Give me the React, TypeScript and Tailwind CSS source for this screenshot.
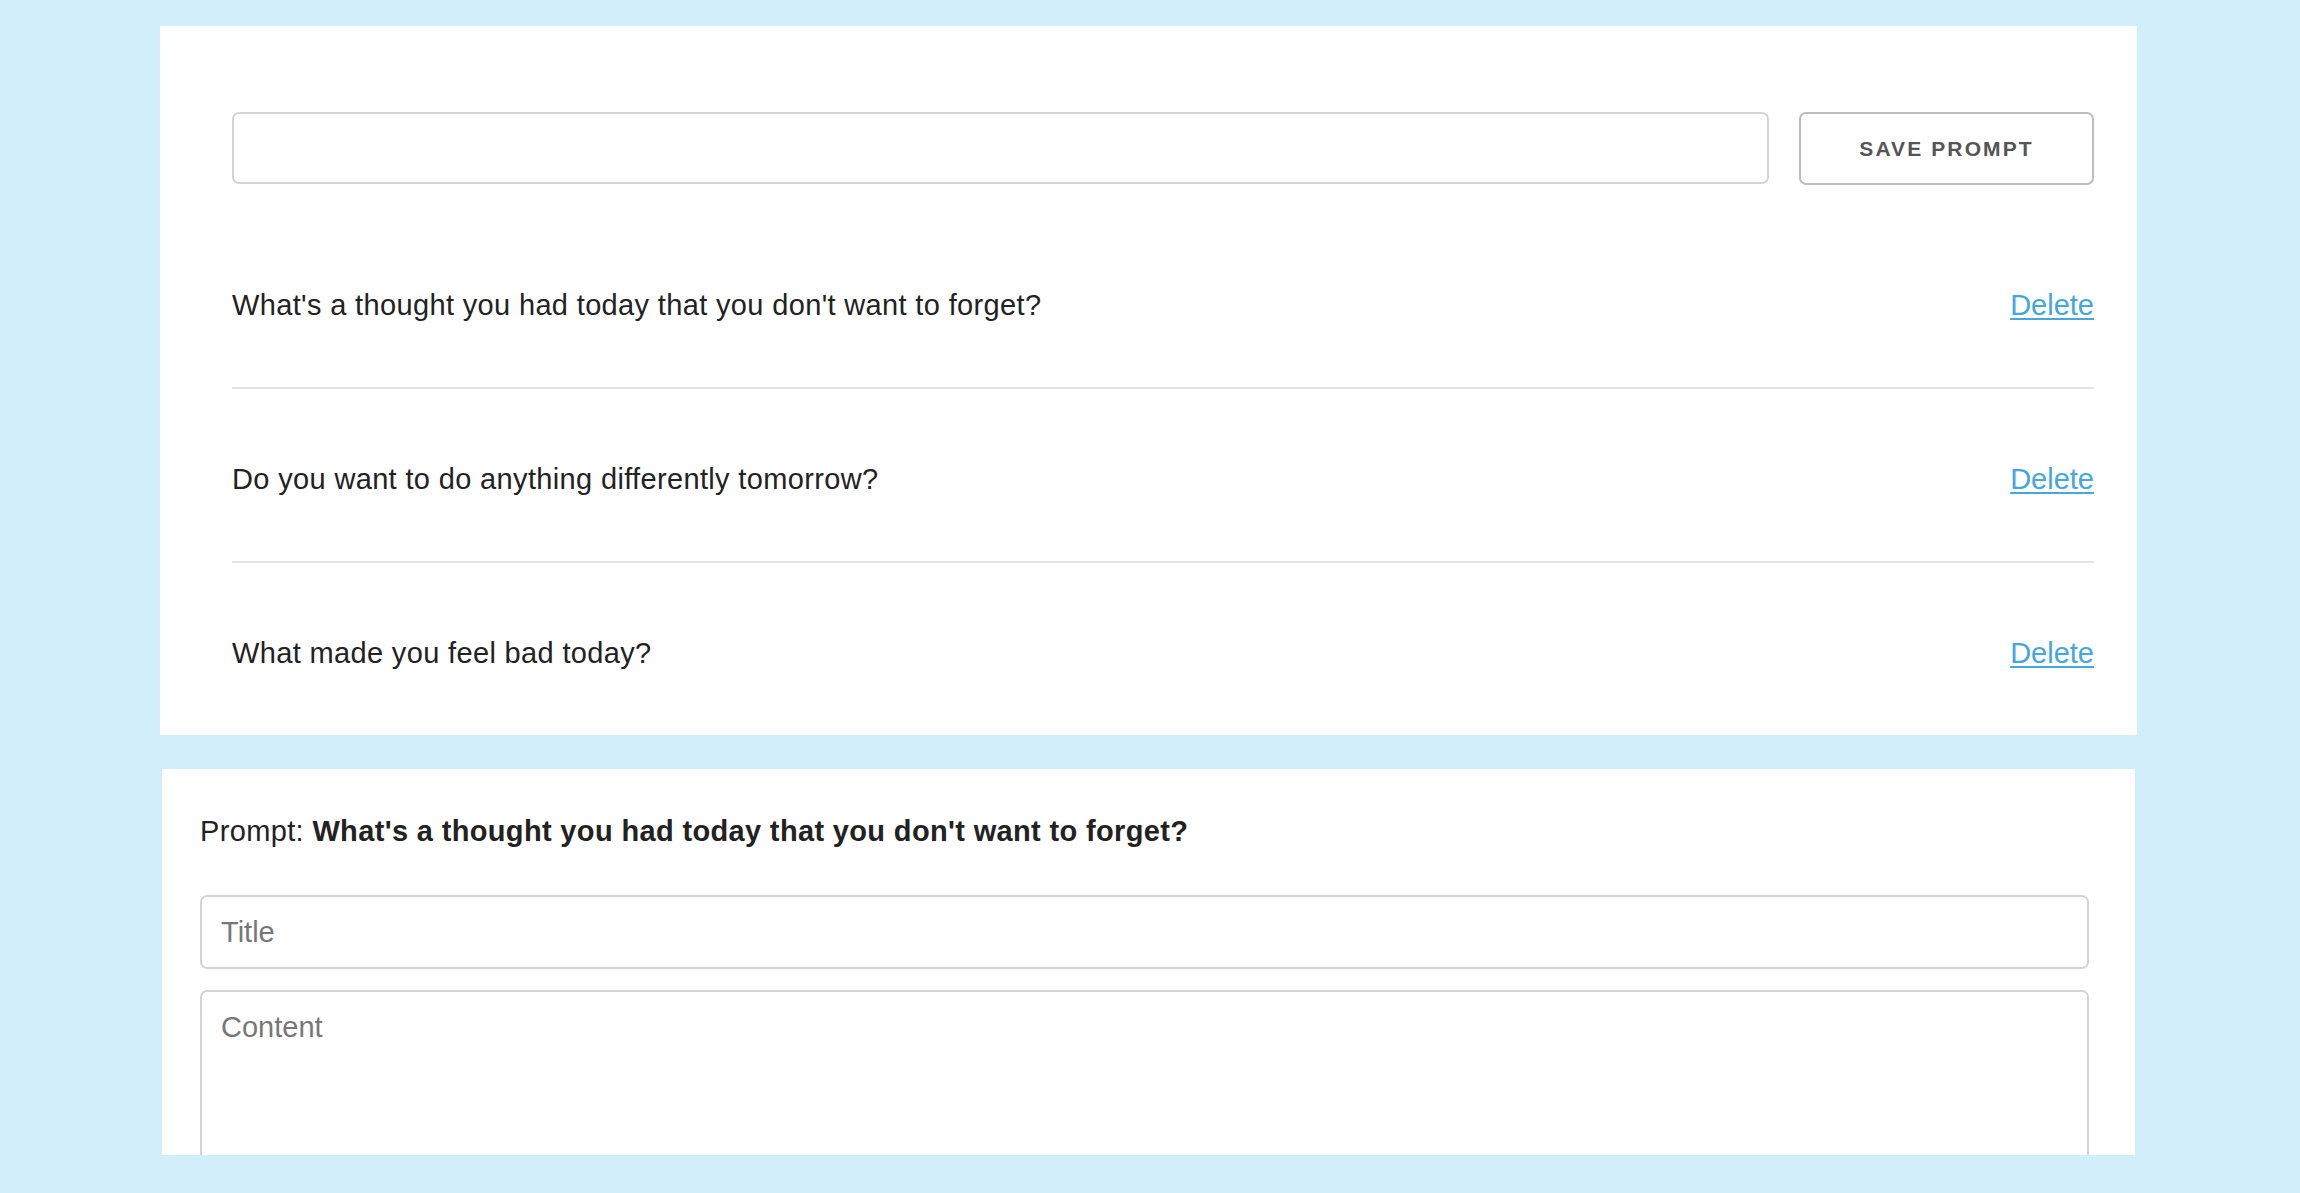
import { useState } from 'react'

const PROMPTS = [
  "What's a thought you had today that you don't want to forget?",
  'Do you want to do anything differently tomorrow?',
  'What made you feel bad today?',
]

export default function App() {
  const [prompts, setPrompts] = useState(PROMPTS)
  const [draft, setDraft] = useState('')

  return (
    <div
      className="min-h-screen w-full bg-[#d2eefb] pt-[26px] text-[#222]"
      style={{ fontFamily: '"Liberation Sans", Arial, Helvetica, sans-serif' }}
    >
      {/* Prompt manager */}
      <div className="ml-[160px] w-[1977px] bg-white pl-[72px] pr-[43px] pt-[86px]">
        <div className="flex gap-[30px]">
          <input
            value={draft}
            onChange={e => setDraft(e.target.value)}
            className="h-[72px] flex-1 rounded-[7px] border-2 border-[#d4d4d4] px-[19px] text-[29px] outline-none"
          />
          <button
            onClick={() => {
              if (draft.trim()) setPrompts([...prompts, draft.trim()])
              setDraft('')
            }}
            className="h-[73px] w-[295px] rounded-[7px] border-2 border-[#bdbdbd] text-[21px] font-bold tracking-[0.1em] text-[#555]"
          >
            SAVE PROMPT
          </button>
        </div>

        <div className="mt-[30px]">
          {prompts.map((p, i) => (
            <div
              key={p}
              className={
                'flex items-baseline justify-between pt-[73px] pb-[65px] text-[29px] leading-[34px] ' +
                (i < prompts.length - 1 ? 'border-b-2 border-[#e4e4e4]' : '')
              }
            >
              <span className="tracking-[0.012em]">{p}</span>
              <a
                href="#"
                onClick={e => {
                  e.preventDefault()
                  setPrompts(prompts.filter(x => x !== p))
                }}
                className="text-[#47a7da] underline underline-offset-[3px]"
              >
                Delete
              </a>
            </div>
          ))}
        </div>
      </div>

      {/* Entry form */}
      <div className="ml-[162px] mt-[34px] h-[386px] w-[1973px] overflow-hidden bg-white pl-[38px] pr-[46px] pt-[45px]">
        <p className="text-[29px] leading-[34px] tracking-[0.012em]">
          Prompt: <span className="font-bold">What's a thought you had today that you don't want to forget?</span>
        </p>
        <input
          placeholder="Title"
          className="mt-[47px] block h-[74px] w-full rounded-[7px] border-2 border-[#d4d4d4] px-[19px] text-[29px] outline-none placeholder:text-[#777]"
        />
        <textarea
          placeholder="Content"
          className="mt-[21px] block h-[320px] w-full resize-none rounded-[7px] border-2 border-[#d4d4d4] px-[19px] py-[18px] text-[29px] leading-[34px] outline-none placeholder:text-[#777]"
        />
      </div>
    </div>
  )
}
